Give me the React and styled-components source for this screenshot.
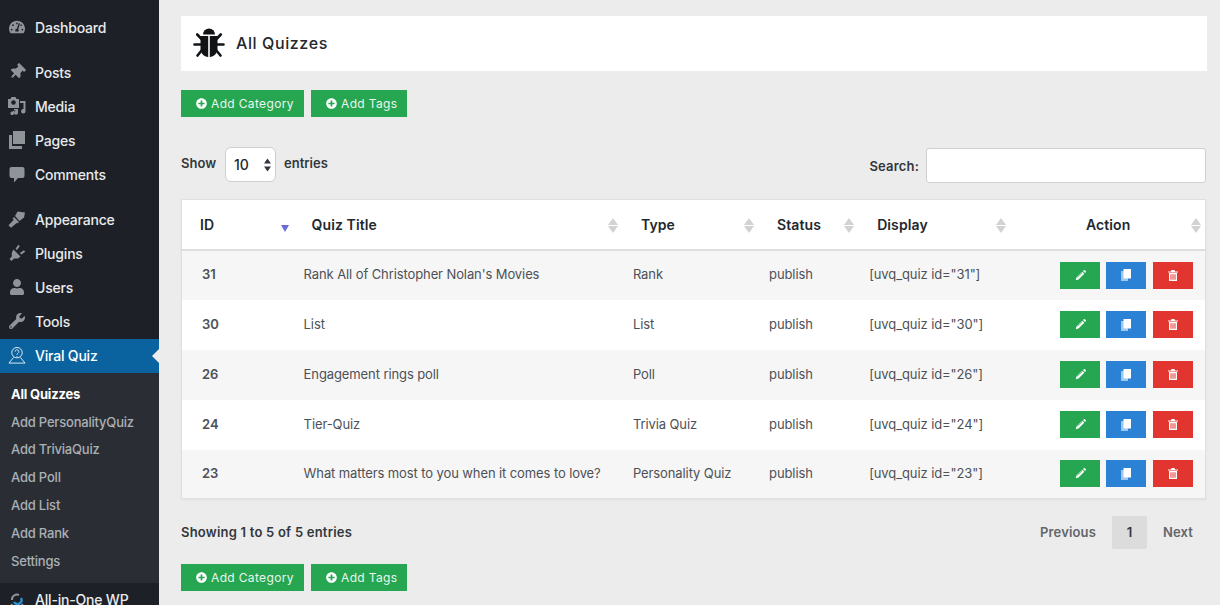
import React from "react";
import styled, { createGlobalStyle } from "styled-components";
import { FaPlusCircle, FaTachometerAlt, FaThumbtack, FaUser, FaWrench } from "react-icons/fa";

const GlobalStyle = createGlobalStyle`
  html, body {
    margin: 0;
    padding: 0;
    height: 605px;
    overflow: hidden;
    background: #ececec;
    font-family: Inter, "Liberation Sans", sans-serif;
    color: #23282d;
  }
  * { box-sizing: border-box; }
`;

const Page = styled.div`
  display: flex;
  width: 1220px;
  height: 605px;
  overflow: hidden;
`;

const Sidebar = styled.nav`
  width: 159px;
  flex: none;
  background: #1d2127;
  padding-top: 11px;
  font-size: 14px;
  letter-spacing: -0.2px;
`;

const MenuGroup = styled.div`
  margin-bottom: ${(p) => p.$gap ?? 11}px;
`;

const MenuItem = styled.div`
  position: relative;
  display: flex;
  align-items: center;
  height: 34px;
  padding: 0 0 2px 8px;
  color: ${(p) => (p.$active ? "#fff" : "#e8eaec")};
  background: ${(p) => (p.$active ? "#0a639f" : "transparent")};
  font-weight: 500;
  ${(p) =>
    p.$active &&
    `&::after {
      content: "";
      position: absolute;
      right: 0;
      top: 10px;
      border: 7px solid transparent;
      border-right-color: #ececec;
      border-left-width: 0;
    }`}
`;

const MenuIcon = styled.span`
  display: flex;
  align-items: center;
  justify-content: center;
  width: 18px;
  height: 18px;
  margin-right: 9px;
  color: ${(p) => (p.$active ? "#fff" : "#8f9499")};
  font-size: 16px;
  transform: ${(p) => p.$turn || "none"};
`;

const SubMenu = styled.div`
  background: #2a2e34;
  padding: 7px 0 8px;
  height: 210px;
`;

const SubItem = styled.div`
  display: flex;
  align-items: center;
  height: 27.8px;
  padding-left: 11px;
  font-size: 13px;
  letter-spacing: -0.2px;
  font-weight: ${(p) => (p.$current ? 700 : 500)};
  color: ${(p) => (p.$current ? "#fff" : "#abb0b5")};
`;

const Main = styled.main`
  flex: 1;
  min-width: 0;
  padding: 16px 13px 0 22px;
`;

const TitleCard = styled.header`
  display: flex;
  align-items: center;
  gap: 11px;
  width: 1026px;
  height: 55px;
  padding: 0 0 2px 12px;
  background: #fff;
`;

const PageTitle = styled.h1`
  margin: 0;
  font-size: 16px;
  font-weight: 500;
  letter-spacing: 0.6px;
  color: #23282d;
`;

const ButtonRow = styled.div`
  display: flex;
  gap: 7px;
  margin-top: ${(p) => p.$top}px;
`;

const AddButton = styled.button`
  display: flex;
  align-items: center;
  gap: 4px;
  width: ${(p) => p.$width}px;
  height: 27px;
  padding: 0 0 0 15px;
  border: 0;
  background: #26a651;
  color: #e9f6ee;
  font-family: inherit;
  font-size: 12px;
  letter-spacing: 0.35px;
  svg { font-size: 11px; color: #fff; }
`;

const Controls = styled.div`
  display: flex;
  justify-content: space-between;
  align-items: flex-start;
  width: 1025px;
  margin-top: 30px;
  height: 36px;
`;

const LengthControl = styled.label`
  display: flex;
  align-items: center;
  height: 35px;
  font-size: 13px;
  font-weight: 600;
  color: #32373c;
  padding-bottom: 3px;
`;

const FakeSelect = styled.div`
  display: flex;
  align-items: center;
  justify-content: space-between;
  width: 51px;
  height: 35px;
  margin: 3px 8px 0 9px;
  padding: 0 3px 0 8px;
  border: 1px solid #cfcfcf;
  border-radius: 6px;
  background: #fff;
  font-size: 14px;
  font-weight: 500;
  color: #23282d;
`;

const SearchControl = styled.label`
  display: flex;
  align-items: center;
  gap: 7px;
  margin-top: 1px;
  font-size: 13px;
  font-weight: 600;
  letter-spacing: 0.18px;
  color: #32373c;
`;

const SearchInput = styled.input`
  width: 280px;
  height: 35px;
  border: 1px solid #cfcfcf;
  border-radius: 3px;
  background: #fff;
`;

const Table = styled.table`
  display: table;
  width: 1025px;
  margin-top: 16px;
  border: 1px solid #e0e0e0;
  border-collapse: collapse;
  table-layout: fixed;
  background: #fff;
  box-shadow: 0 1px 2px rgba(0, 0, 0, 0.06);
`;

const HeadCell = styled.th`
  position: relative;
  height: 50px;
  padding: 0 0 0 ${(p) => p.$pad ?? 18}px;
  border-bottom: 2px solid #dedede;
  text-align: ${(p) => (p.$center ? "center" : "left")};
  font-size: 14px;
  font-weight: 600;
  letter-spacing: 0.1px;
  color: #23282d;
`;

const SortMark = styled.span`
  position: absolute;
  right: 5px;
  top: 18px;
  display: flex;
  flex-direction: column;
  gap: 1px;
  th:last-child & { right: 4px; }
  &::before,
  &::after {
    content: "";
    border-left: 5px solid transparent;
    border-right: 5px solid transparent;
  }
  &::before { border-bottom: 7px solid #d2d2d2; }
  &::after { border-top: 7px solid #d2d2d2; }
`;

const SortedMark = styled.span`
  position: absolute;
  right: 5px;
  top: 25px;
  border-left: 4px solid transparent;
  border-right: 4px solid transparent;
  border-top: 7px solid #6b6bd6;
`;

const Row = styled.tr`
  height: 50px;
  background: ${(p) => (p.$odd ? "#f6f6f6" : "#fff")};
  &:last-child { height: 49px; }
`;

const Cell = styled.td`
  padding: 0 0 2px 10px;
  font-size: 13px;
  letter-spacing: -0.1px;
  color: #4d5156;
`;

const IdCell = styled.td`
  padding: 0 0 2px 20px;
  font-size: 13px;
  font-weight: 600;
  color: #4d5156;
`;

const ActionCell = styled.td`
  padding: 0 12px 0 0;
`;

const Actions = styled.div`
  display: flex;
  justify-content: flex-end;
  gap: 6px;
  & > :last-child { margin-left: 1px; }
`;

const ActionButton = styled.button`
  display: flex;
  align-items: center;
  justify-content: center;
  width: 40px;
  height: 27px;
  padding: 0;
  border: 0;
  background: ${(p) => p.$color};
  color: #fff;
`;

const Footer = styled.div`
  display: flex;
  justify-content: space-between;
  align-items: center;
  width: 1025px;
  height: 34px;
  margin-top: 16px;
`;

const Info = styled.div`
  font-size: 13px;
  font-weight: 600;
  letter-spacing: 0.22px;
  color: #32373c;
`;

const Pager = styled.div`
  display: flex;
  align-items: center;
  font-size: 13px;
  font-weight: 600;
  letter-spacing: 0.15px;
`;

const PageLink = styled.span`
  display: flex;
  align-items: center;
  justify-content: ${(p) => p.$align || "center"};
  height: 33px;
  width: ${(p) => p.$width}px;
  padding: 0 16px;
  border-radius: 2px;
  background: ${(p) => (p.$current ? "#dcdcdc" : "transparent")};
  color: ${(p) => (p.$current ? "#32373c" : "#63666a")};
`;

const MediaIcon = () => (
  <svg width="18" height="18" viewBox="0 0 18 18" fill="currentColor">
    <path
      fillRule="evenodd"
      d="M0 2h2.500l1-2h4l1 2H11v9H0zM5.500 3.200a2.300 2.300 0 1 0 0 4.600 2.300 2.300 0 0 0 0-4.600z"
    />
    <path d="M12 4h5.500v10.300a2.200 2.200 0 1 1-2-2.200V6H12zM6 12h4v3.800a2 2 0 1 1-2-2V13.500H6v2.800a1.800 1.800 0 1 1-1.300-1.700L6 13.500z" />
  </svg>
);

const PagesIcon = () => (
  <svg width="16" height="18" viewBox="0 0 16 18" fill="currentColor">
    <path d="M4 0h12v13H4z" />
    <path d="M0 4h3v11h10v3H0z" />
  </svg>
);

const CommentIcon = () => (
  <svg width="16" height="17" viewBox="0 0 16 17" fill="currentColor">
    <path d="M2.500 1h11A2 2 0 0 1 15.500 3v7a2 2 0 0 1-2 2H9l-4 4.500V12H2.500a2 2 0 0 1-2-2V3a2 2 0 0 1 2-2z" />
  </svg>
);

const BrushIcon = () => (
  <svg width="18" height="18" viewBox="0 0 18 18" fill="currentColor">
    <path d="M9.500 1.500 17 2.500 16 7.500 11.500 11 7 6z" />
    <path d="M6 7l5 5-1.500 1.500L9 12.800 3 17.800.5 15.300 5.800 9.800 4.500 8.500z" />
  </svg>
);

const PlugIcon = () => (
  <svg width="18" height="18" viewBox="0 0 18 18" fill="currentColor">
    <path d="M5.500 5.500 12.500 12.500 10 14.500H6L3.500 17 1.500 15 3.800 12.500V8.500z" />
    <path d="M7.500 4.700 10.300.800 11.800 2.200 8.900 6.100zM11.900 9 15.900 6.200 17.200 7.700 13.300 10.500z" />
  </svg>
);

const QuizIcon = () => (
  <svg width="19" height="19" viewBox="0 0 19 19" fill="none" stroke="#fff" strokeWidth="0.9">
    <circle cx="9.500" cy="6.500" r="5.500" />
    <path d="M7.500 5.500a2 2 0 1 1 3 1.700c-.7.400-1 .8-1 1.500" strokeWidth="0.8" />
    <path d="M6 11.500 1 17.500h17l-5-6" />
    <path d="M9.500 10v1" />
  </svg>
);

const SeoIcon = () => (
  <svg width="18" height="18" viewBox="0 0 18 18" fill="none">
    <path d="M4 10a5 5 0 0 1 7-5" stroke="#8f9499" strokeWidth="2" />
    <path d="M6 12a4 4 0 0 0 7-4" stroke="#2b8fd8" strokeWidth="2.500" />
    <path d="M3 14a8 8 0 0 0 12 0" stroke="#8f9499" strokeWidth="1.500" />
  </svg>
);

const SpinArrows = () => (
  <svg width="9" height="14" viewBox="0 0 9 14" fill="#33373c">
    <path d="M4.500 0.500 8 5.500H1zM4.500 13.500 1 8.500h7z" />
  </svg>
);

const BugIcon = () => (
  <svg width="32" height="32" viewBox="0 0 32 32" fill="#111315">
    <path d="M10 7.500a6 6 0 0 1 12 0z" />
    <path d="M7.500 9h7.700v21c-4.200-.3-7.700-3.700-7.700-8zM16.800 9h7.700v13c0 4.300-3.500 7.700-7.700 8z" />
    <g stroke="#111315" strokeWidth="2.600" strokeLinecap="round" fill="none">
      <path d="M8.500 12 4.200 7.500M23.500 12l4.300-4.500" />
      <path d="M8 17.500H1.500M24 17.500h6.500" />
      <path d="M9 23l-4.500 5.500M23 23l4.500 5.500" />
    </g>
  </svg>
);

const PencilIcon = () => (
  <svg width="11" height="11" viewBox="0 0 11 11" fill="#fff">
    <path d="M7.300 1.700 9.300 3.700 3.500 9.500 0.700 10.300 1.500 7.500z" />
    <path d="M8 1 8.800.300a.8.800 0 0 1 1.100 0l.8.800a.8.800 0 0 1 0 1.100L10 3z" />
    <path d="M2.300 7.600 7.100 2.800" stroke="#26a651" strokeWidth="0.6" />
  </svg>
);

const CopyIcon = () => (
  <svg width="10" height="12" viewBox="0 0 10 12" fill="#fff">
    <path d="M0 2h7v10H0z" opacity="0.55" />
    <path d="M2.500 0H10v9.500H2.500z" />
  </svg>
);

const TrashIcon = () => (
  <svg width="10" height="11" viewBox="0 0 10 11" fill="#fff">
    <path d="M3.500 0h3l.5 1.500h3v1H0v-1h3z" />
    <path
      fillRule="evenodd"
      d="M1 3h8v8H1zM2.500 4.200v5.500h1V4.200zM4.500 4.200v5.500h1V4.200zM6.500 4.200v5.500h1V4.200z"
    />
  </svg>
);

const topItems = [
  { label: "Posts", icon: <FaThumbtack />, turn: "rotate(45deg)" },
  { label: "Media", icon: <MediaIcon /> },
  { label: "Pages", icon: <PagesIcon /> },
  { label: "Comments", icon: <CommentIcon /> },
];

const lowerItems = [
  { label: "Appearance", icon: <BrushIcon /> },
  { label: "Plugins", icon: <PlugIcon /> },
  { label: "Users", icon: <FaUser /> },
  { label: "Tools", icon: <FaWrench /> },
];

const subItems = [
  "All Quizzes",
  "Add PersonalityQuiz",
  "Add TriviaQuiz",
  "Add Poll",
  "Add List",
  "Add Rank",
  "Settings",
];

const quizzes = [
  { id: 31, title: "Rank All of Christopher Nolan's Movies", type: "Rank" },
  { id: 30, title: "List", type: "List" },
  { id: 26, title: "Engagement rings poll", type: "Poll" },
  { id: 24, title: "Tier-Quiz", type: "Trivia Quiz" },
  { id: 23, title: "What matters most to you when it comes to love?", type: "Personality Quiz" },
];

const AddButtons = ({ top }) => (
  <ButtonRow $top={top}>
    <AddButton $width={123}>
      <FaPlusCircle /> Add Category
    </AddButton>
    <AddButton $width={96}>
      <FaPlusCircle /> Add Tags
    </AddButton>
  </ButtonRow>
);

const App = () => {
  return (
    <Page>
      <GlobalStyle />
      <Sidebar>
        <MenuGroup>
          <MenuItem>
            <MenuIcon>
              <FaTachometerAlt />
            </MenuIcon>
            Dashboard
          </MenuItem>
        </MenuGroup>
        <MenuGroup>
          {topItems.map((item) => (
            <MenuItem key={item.label}>
              <MenuIcon $turn={item.turn}>{item.icon}</MenuIcon>
              {item.label}
            </MenuItem>
          ))}
        </MenuGroup>
        <MenuGroup $gap={0}>
          {lowerItems.map((item) => (
            <MenuItem key={item.label}>
              <MenuIcon>{item.icon}</MenuIcon>
              {item.label}
            </MenuItem>
          ))}
          <MenuItem $active>
            <MenuIcon $active>
              <QuizIcon />
            </MenuIcon>
            Viral Quiz
          </MenuItem>
        </MenuGroup>
        <SubMenu>
          {subItems.map((label, i) => (
            <SubItem key={label} $current={i === 0}>
              {label}
            </SubItem>
          ))}
        </SubMenu>
        <MenuItem>
          <MenuIcon>
            <SeoIcon />
          </MenuIcon>
          All-in-One WP
        </MenuItem>
      </Sidebar>

      <Main>
        <TitleCard>
          <BugIcon />
          <PageTitle>All Quizzes</PageTitle>
        </TitleCard>

        <AddButtons top={19} />

        <Controls>
          <LengthControl>
            Show
            <FakeSelect>
              10
              <SpinArrows />
            </FakeSelect>
            entries
          </LengthControl>
          <SearchControl>
            Search:
            <SearchInput />
          </SearchControl>
        </Controls>

        <Table>
          <colgroup>
            <col width="112" />
            <col width="329" />
            <col width="136" />
            <col width="100" />
            <col width="152" />
            <col width="194" />
          </colgroup>
          <thead>
            <tr>
              <HeadCell>
                ID
                <SortedMark />
              </HeadCell>
              <HeadCell>
                Quiz Title
                <SortMark />
              </HeadCell>
              <HeadCell>
                Type
                <SortMark />
              </HeadCell>
              <HeadCell>
                Status
                <SortMark />
              </HeadCell>
              <HeadCell>
                Display
                <SortMark />
              </HeadCell>
              <HeadCell $center $pad={0}>
                Action
                <SortMark />
              </HeadCell>
            </tr>
          </thead>
          <tbody>
            {quizzes.map((quiz, i) => (
              <Row key={quiz.id} $odd={i % 2 === 0}>
                <IdCell>{quiz.id}</IdCell>
                <Cell>{quiz.title}</Cell>
                <Cell>{quiz.type}</Cell>
                <Cell>publish</Cell>
                <Cell>[uvq_quiz id="{quiz.id}"]</Cell>
                <ActionCell>
                  <Actions>
                    <ActionButton $color="#26a651">
                      <PencilIcon />
                    </ActionButton>
                    <ActionButton $color="#2b82d4">
                      <CopyIcon />
                    </ActionButton>
                    <ActionButton $color="#e2352f">
                      <TrashIcon />
                    </ActionButton>
                  </Actions>
                </ActionCell>
              </Row>
            ))}
          </tbody>
        </Table>

        <Footer>
          <Info>Showing 1 to 5 of 5 entries</Info>
          <Pager>
            <PageLink $width={88} $align="flex-end">
              Previous
            </PageLink>
            <PageLink $width={35} $current>
              1
            </PageLink>
            <PageLink $width={59} $align="flex-start">
              Next
            </PageLink>
          </Pager>
        </Footer>

        <AddButtons top={15} />
      </Main>
    </Page>
  );
};

export default App;
